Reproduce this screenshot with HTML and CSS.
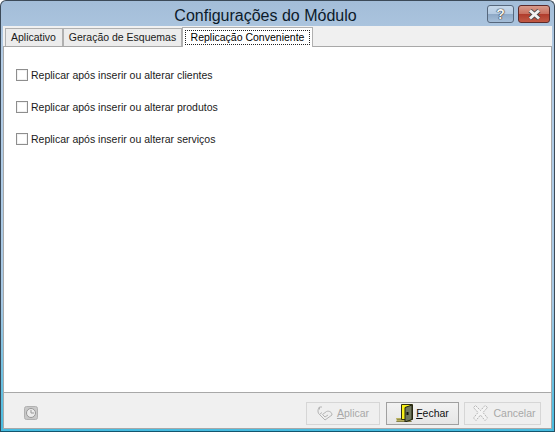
FILE: index.html
```html
<!DOCTYPE html>
<html lang="pt">
<head>
<meta charset="utf-8">
<title>Configurações do Módulo</title>
<link rel="stylesheet" href="styles.css">
</head>
<body>
<div class="window">
  <header class="titlebar">
    <h1 class="title">Configurações do Módulo</h1>
    <div class="controls">
      <div class="ctl ctl-help">?</div>
      <div class="ctl ctl-close">
        <svg width="15" height="11" viewBox="0 0 15 11"><path d="M3 1.5 L12 9.5 M12 1.5 L3 9.5" stroke="#4a4a4a" stroke-width="4.6" fill="none"/><path d="M3 1.5 L12 9.5 M12 1.5 L3 9.5" stroke="#f2f2f2" stroke-width="3" fill="none"/></svg>
      </div>
    </div>
  </header>
  <div class="client">
    <div class="tabs">
      <div class="tab tab-a">Aplicativo</div>
      <div class="tab tab-b">Geração de Esquemas</div>
      <div class="tab tab-active"><span class="focus">Replicação Conveniente</span></div>
    </div>
    <main class="page">
      <div class="check"><span class="box"></span><span>Replicar após inserir ou alterar clientes</span></div>
      <div class="check"><span class="box"></span><span>Replicar após inserir ou alterar produtos</span></div>
      <div class="check"><span class="box"></span><span>Replicar após inserir ou alterar serviços</span></div>
    </main>
    <footer class="footer">
      <div class="clock">
        <svg width="14" height="14" viewBox="0 0 14 14"><rect x="0.5" y="0.5" width="13" height="13" rx="2" fill="#c4c4c4" stroke="#ababab"/><circle cx="7" cy="7" r="4.5" fill="#ececec" stroke="#8f8f8f"/><path d="M7 4V7H10" stroke="#8f8f8f" fill="none"/></svg>
      </div>
      <div class="buttons">
        <div class="btn btn-disabled btn-apply">
          <svg width="16" height="15" viewBox="0 0 16 15"><g fill="none" stroke="#b4b4b4"><path d="M2.5 1 C0.5 3 0.5 7 2.5 8.5 L5 6.5"/><path d="M5 1 L2.5 1 L2.5 3.5"/><path d="M2.5 8.5 L8 14 L15 9 C15 6 12 4.5 9.5 5.5 L5.5 8.5 L8 11 L11 9"/></g></svg>
          <span><u>A</u>plicar</span>
        </div>
        <div class="btn btn-close">
          <svg width="17" height="18" viewBox="0 0 17 18"><path d="M0 14h15v4H1z" fill="#b8b060"/><path d="M0.5 17.5h15" stroke="#55552a" stroke-dasharray="1 1"/><path d="M1.5 15.5h13" stroke="#6c6c30" stroke-dasharray="1 1"/><path d="M5.5 0.5h11v15h-11z" fill="#f8f018" stroke="#2e2e10"/><path d="M9 3.5l7-2.5v14.500l-7 2.500z" fill="#71795e" stroke="#1e2110"/><rect x="10.500" y="8" width="2" height="3" fill="#14160a"/></svg>
          <span><u>F</u>echar</span>
        </div>
        <div class="btn btn-disabled btn-cancel">
          <svg width="15" height="16" viewBox="0 0 15 16"><path d="M2.500 0.500 L7.500 5.500 L12 0.500 L14.500 2.500 L10 7.500 L14.500 13 L12 15.500 L7.500 10 L3 15.500 L0.500 13 L5 7.500 L0.500 2.500z" fill="#f4f4f4" stroke="#b4b4b4" stroke-dasharray="2 1"/></svg>
          <span>Cancelar</span>
        </div>
      </div>
    </footer>
  </div>
</div>
</body>
</html>
```
FILE: styles.css
```css
* { box-sizing: border-box; }
html, body { margin: 0; padding: 0; }
body { width: 555px; height: 432px; overflow: hidden; background: #fff; font-family: "Liberation Sans", Arial, sans-serif; font-size: 10.5px; color: #000; }
.window { width: 555px; height: 432px; display: flex; flex-direction: column; padding: 0 2px 2px 2px; border: 1px solid #3c4a58; border-bottom-color: #14566e; border-radius: 6px 6px 0 0; background: linear-gradient(#a3bdd8 0, #b4cde6 60px, #a6c8e4 300px, #45bce0 432px); }
.titlebar { height: 25px; flex: none; display: flex; justify-content: center; align-items: center; position: relative; padding-right: 22px; }
.title { margin: 0; font-size: 16px; font-weight: 400; color: #0c1a2a; font-family: "Liberation Sans", Arial, sans-serif; padding-top: 5px; padding-right: 2px; }
.controls { position: absolute; top: 4px; right: 2px; display: flex; gap: 4px; }
.ctl { height: 18px; border: 1px solid #56677c; border-radius: 3px; display: flex; align-items: center; justify-content: center; }
.ctl-help { width: 27px; background: linear-gradient(#c6d8ea 0, #b5cbe2 48%, #8ea9c6 52%, #a5bed8 100%); font: bold 14px "Liberation Sans", sans-serif; color: #f2f2f2; text-shadow: 0 0 1px #333, 0 0 1px #333, 0 0 1px #333; }
.ctl-close { width: 32px; border-color: #5c2a2a; background: linear-gradient(#d89a8a 0, #c9705f 48%, #b03c2c 52%, #c25a45 100%); }
.client { flex: 1; min-height: 0; display: flex; flex-direction: column; background: #f0f0f0; }
.tabs { height: 20px; flex: none; display: flex; padding: 2px 0 0 2px; align-items: flex-end; position: relative; z-index: 1; }
.tab { height: 18px; padding: 2px 0 0; text-align: center; border: 1px solid #b0b0b0; border-bottom: 0; background: #ececec; color: #1a1a1a; white-space: nowrap; }
.tab-a { width: 58px; padding-right: 1px; }
.tab-b { width: 119px; }
.tab-active { width: 131px; height: 20px; margin-top: -2px; padding: 2px; background: #fff; position: relative; top: 1px; }
.focus { display: block; height: 15px; line-height: 13px; border: 1px dotted #222; color: #000; }
.page { flex: 1; min-height: 0; background: #fff; border: 1px solid #a8a8a8; display: flex; flex-direction: column; gap: 18px; padding: 21px 0 0 12px; }
.check { display: flex; align-items: center; gap: 3px; height: 14px; color: #1a1a1a; }
.box { width: 12px; height: 12px; background: #fff; border: 1px solid #8e8e8e; flex: none; box-shadow: inset 0 0 0 1px #f2f2f2; }
.footer { height: 36px; flex: none; display: flex; align-items: center; justify-content: space-between; padding: 5px 10px 0 20px; border: 1px solid #a8a8a8; border-top: 0; }
.clock { display: flex; opacity: .9; }
.buttons { display: flex; gap: 6px; }
.btn { height: 23px; border: 1px solid #a8a8a8; display: flex; align-items: center; justify-content: center; background: #efefef; }
.btn-disabled { border-color: #d6d6d6; color: #a8a8a8; }
.btn-apply { width: 74px; gap: 4px; }
.btn-close { width: 73px; gap: 3px; border-color: #a0a0a0; background: linear-gradient(#f2f2f2, #e6e6e6); color: #111; }
.btn-cancel { width: 77px; margin-left: -1px; gap: 5px; padding-left: 4px; }
```
